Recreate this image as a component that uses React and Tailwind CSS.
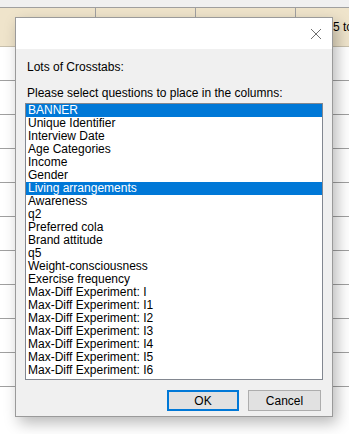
import React, { useState } from "react";

const questions = [
  "BANNER",
  "Unique Identifier",
  "Interview Date",
  "Age Categories",
  "Income",
  "Gender",
  "Living arrangements",
  "Awareness",
  "q2",
  "Preferred cola",
  "Brand attitude",
  "q5",
  "Weight-consciousness",
  "Exercise frequency",
  "Max-Diff Experiment: I",
  "Max-Diff Experiment: I1",
  "Max-Diff Experiment: I2",
  "Max-Diff Experiment: I3",
  "Max-Diff Experiment: I4",
  "Max-Diff Experiment: I5",
  "Max-Diff Experiment: I6",
];

const rows = Array.from({ length: 10 });

export default function App() {
  const [selected, setSelected] = useState([0, 6]);

  function toggle(i) {
    setSelected(s => (s.includes(i) ? s.filter(x => x !== i) : [...s, i]));
  }

  return (
    <div
      className="relative w-[349px] h-[434px] overflow-hidden bg-white text-[12px] text-black"
      style={{ fontFamily: '"Liberation Sans", Arial, sans-serif' }}
    >
      {/* sheet behind the dialog */}
      <div className="h-[8px] bg-[#f0f0f0] border-b border-[#a0a0a0]" />
      <div className="flex h-[39px] bg-[#efe4cb] border-b border-[#c8c0ad]">
        <div className="w-[96px] shrink-0 border-r border-[#a0a0a0]" />
        <div className="w-[100px] shrink-0 border-r border-[#a0a0a0]" />
        <div className="w-[100px] shrink-0 border-r border-[#a0a0a0]" />
        <div className="flex-1 pl-[37px] flex items-center whitespace-nowrap">
          5 to
        </div>
      </div>
      {rows.map((_, i) => (
        <div key={i} className="h-[34px] border-b border-[#a0a0a0]" />
      ))}

      {/* dialog */}
      <div className="absolute left-[15px] top-[17px] w-[318px] h-[400px] flex flex-col border border-[#9a9a9a] bg-[#f0f0f0] shadow-[4px_6px_14px_rgba(0,0,0,0.28)]">
        <div className="h-[31px] shrink-0 bg-white flex items-center justify-end pr-[10px]">
          <svg width="12" height="12" viewBox="0 0 12 12">
            <path d="M1 1 L11 11 M11 1 L1 11" stroke="#6f6f6f" strokeWidth="1" />
          </svg>
        </div>
        <div className="flex flex-col px-[9px] flex-1">
          <div className="pl-[2px] mt-[11px] leading-[14px]">Lots of Crosstabs:</div>
          <div className="pl-[2px] mt-[12px] leading-[14px]">
            Please select questions to place in the columns:
          </div>
          <div className="mt-[3px] h-[277px] w-[298px] border border-[#828790] bg-white overflow-hidden">
            {questions.map((q, i) => (
              <div
                key={q}
                onClick={() => toggle(i)}
                className={
                  "h-[13px] leading-[13px] pl-[2px] whitespace-nowrap cursor-default " +
                  (selected.includes(i) ? "bg-[#0078d7] text-white" : "")
                }
              >
                {q}
              </div>
            ))}
          </div>
          <div className="flex justify-end gap-[9px] mt-[10px] pr-[2px]">
            <button className="w-[72px] h-[21px] bg-[#e1e1e1] border-2 border-[#0078d7]">
              OK
            </button>
            <button className="w-[73px] h-[21px] bg-[#e1e1e1] border border-[#adadad]">
              Cancel
            </button>
          </div>
        </div>
      </div>
    </div>
  );
}
